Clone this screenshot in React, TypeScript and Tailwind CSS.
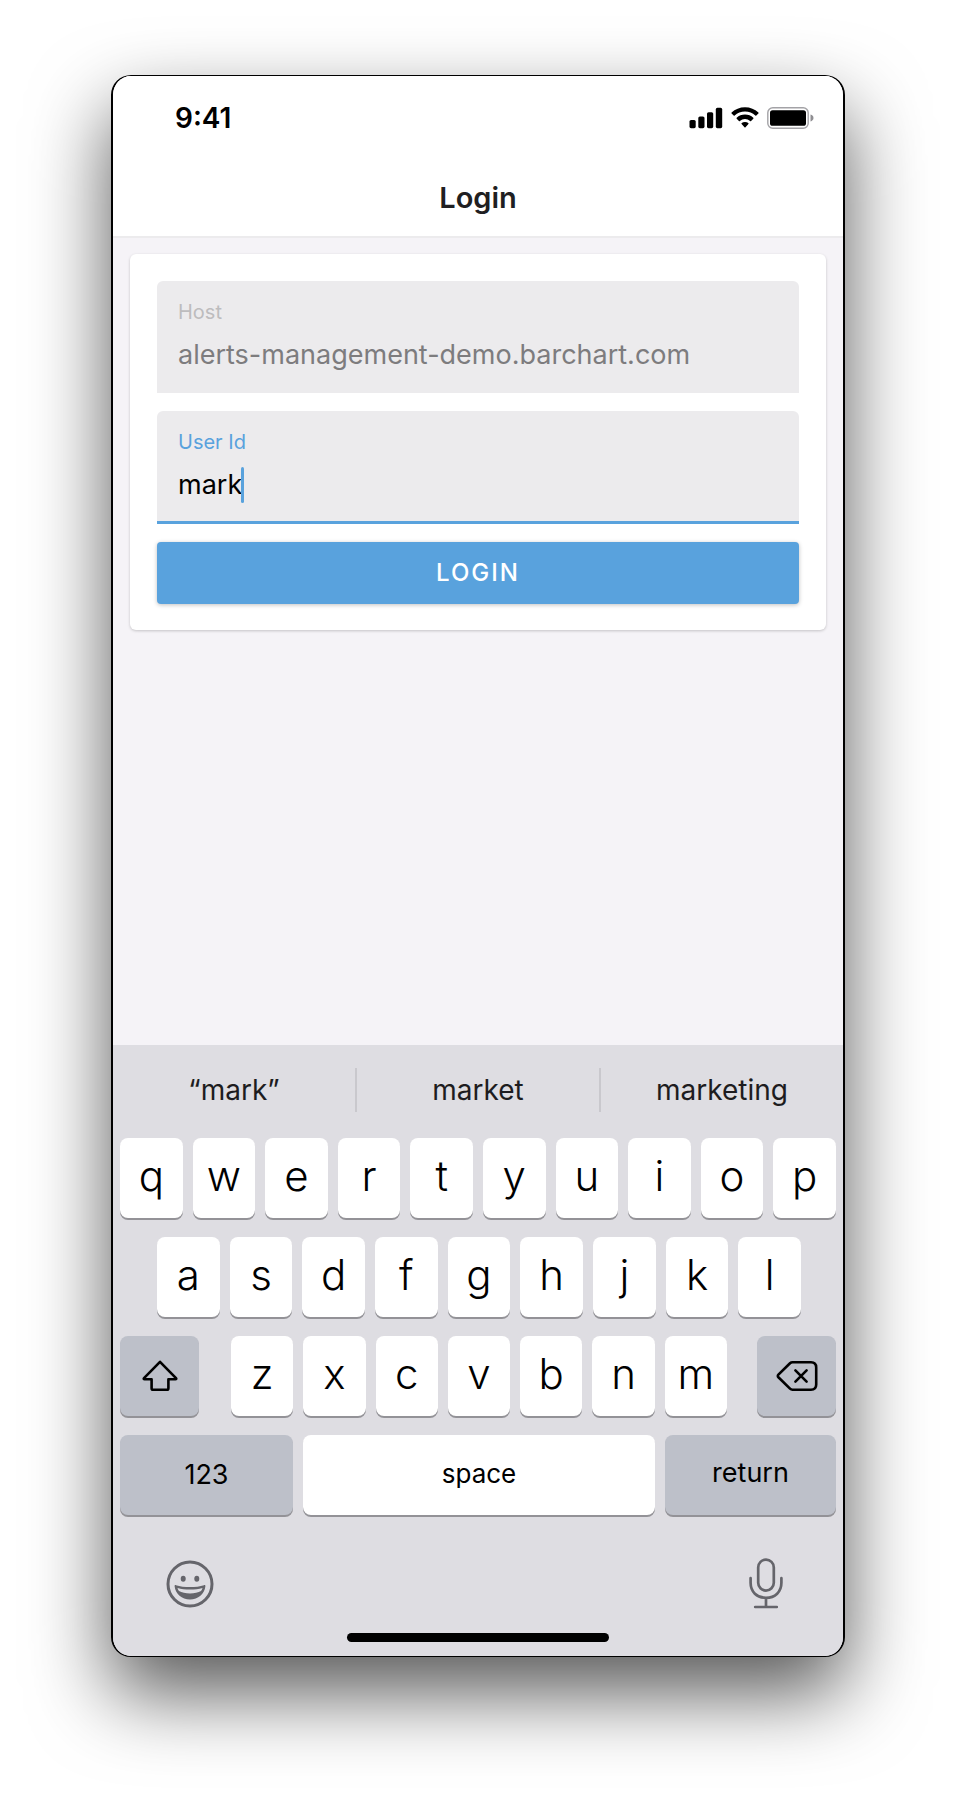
import React, { useState } from "react";

const TOP_ROW = ["q", "w", "e", "r", "t", "y", "u", "i", "o", "p"];
const MIDDLE_ROW = ["a", "s", "d", "f", "g", "h", "j", "k", "l"];
const BOTTOM_ROW = ["z", "x", "c", "v", "b", "n", "m"];
const SUGGESTIONS = ["“mark”", "market", "marketing"];

function SignalIcon() {
  return (
    <svg width="34" height="22" viewBox="0 0 34 22" aria-hidden="true">
      <rect x="0.5" y="13" width="6.2" height="8.2" rx="1.6" />
      <rect x="9.3" y="9.5" width="6.2" height="11.7" rx="1.6" />
      <rect x="18" y="5.2" width="6.2" height="16" rx="1.6" />
      <rect x="26.8" y="0.8" width="6.4" height="20.4" rx="1.6" />
    </svg>
  );
}

function WifiIcon() {
  return (
    <svg width="28" height="22" viewBox="0 0 28 22" aria-hidden="true">
      <path d="M14 0.2C8.8 0.2 4.1 2.2 0.6 5.5c-.3.3-.3.7 0 1l2.1 2.1c.3.3.7.3 1 0C6.4 6.1 10 4.6 14 4.600s7.600 1.500 10.300 4c.3.3.7.3 1 0l2.100-2.100c.3-.3.3-.7 0-1C23.900 2.200 19.200.2 14 .2Z" />
      <path d="M14 7.600c-3.200 0-6.100 1.200-8.300 3.200-.3.3-.3.7 0 1l2.200 2.200c.3.3.7.3 1 0 1.400-1.200 3.200-2 5.100-2s3.700.8 5.100 2c.3.3.7.3 1 0l2.200-2.200c.3-.3.3-.7 0-1-2.200-2-5.100-3.200-8.300-3.200Z" />
      <path d="M14 14.900c-1.300 0-2.400.4-3.300 1.100-.3.3-.4.7-.1 1.100l2.900 3.100c.3.3.7.3 1 0l2.900-3.100c.3-.4.2-.8-.1-1.100-.9-.7-2-1.100-3.300-1.100Z" />
    </svg>
  );
}

function BatteryIcon() {
  return (
    <svg width="47" height="22" viewBox="0 0 47 22" aria-hidden="true">
      <rect x="0.8" y="0.7" width="40.4" height="20.6" rx="5" fill="none" stroke="#a3a2a6" strokeWidth="1.4" />
      <rect x="3" y="3.2" width="36" height="15.6" rx="2.6" />
      <path d="M43.500 7.500c1.900.6 3 1.900 3 3.500s-1.100 2.900-3 3.500Z" fill="#8f8e92" />
    </svg>
  );
}

function ShiftIcon() {
  return (
    <svg width="36" height="32" viewBox="0 0 36 32" fill="none" stroke="#000" strokeWidth="2.6" strokeLinejoin="round" aria-hidden="true">
      <path d="M18 1.800 34 18.200c.5.500.2 1-.5 1H26.400V28.200c0 1-.6 1.600-1.600 1.600H11.200c-1 0-1.600-.6-1.600-1.600V19.200H2.500c-.7 0-1-.5-.5-1Z" />
    </svg>
  );
}

function BackspaceIcon() {
  return (
    <svg width="42" height="32" viewBox="0 0 42 32" fill="none" stroke="#000" strokeWidth="2.6" strokeLinejoin="round" strokeLinecap="round" aria-hidden="true">
      <path d="M16.500 2.200H35c3.200 0 5.200 2 5.200 5.200v17.200c0 3.200-2 5.200-5.200 5.200H16.500c-1 0-1.800-.4-2.500-1.100L2.400 17.300c-.8-.8-.8-1.800 0-2.600L14 3.300c.7-.7 1.500-1.100 2.500-1.100Z" />
      <path d="m19.400 10.400 11.200 11.200M30.600 10.400 19.400 21.600" />
    </svg>
  );
}

function EmojiIcon() {
  return (
    <svg width="48" height="48" viewBox="0 0 48 48" fill="#65656b" aria-hidden="true">
      <circle cx="24" cy="24" r="22" fill="none" stroke="#65656b" strokeWidth="3" />
      <ellipse cx="17.200" cy="18.700" rx="2.500" ry="3" />
      <ellipse cx="30.800" cy="18.700" rx="2.500" ry="3" />
      <path
        fillRule="evenodd"
        d="M10 25.200c3.800 1.300 8.800 1.900 14 1.900s10.200-.6 14-1.900c.9-.3 1.500.2 1.400 1.100C38.600 33.800 32.100 39.600 24 39.600S9.400 33.800 8.600 26.300c-.1-.9.500-1.400 1.400-1.100Zm1.500 2.700c.3 1.200.8 2.200 1.500 3.100 2.700 1.500 6.600 2.400 11 2.400s8.300-.9 11-2.400c.7-.9 1.200-1.900 1.500-3.100-3.600 1-8 1.500-12.500 1.500s-8.900-.5-12.500-1.500Z"
      />
    </svg>
  );
}

function MicIcon() {
  return (
    <svg width="34" height="51" viewBox="0 0 34 51" fill="none" stroke="#65656b" strokeWidth="2.700" strokeLinecap="round" aria-hidden="true">
      <rect x="9.200" y="1.600" width="15.600" height="31" rx="7.800" />
      <path d="M1.600 20.200v4.600c0 9 6.200 15 15.400 15s15.400-6 15.400-15v-4.600M17 40v8.500M6.200 49H27.800" />
    </svg>
  );
}

type KeyProps = { label: string; onPress: () => void };

function LetterKey({ label, onPress }: KeyProps) {
  return (
    <button
      type="button"
      onClick={onPress}
      className="flex h-20 min-w-0 flex-1 items-center justify-center rounded-lg bg-white pb-1 text-[42px] leading-none font-light shadow-[0_2px_0_#939297]"
    >
      {label}
    </button>
  );
}

const FUNCTION_KEY =
  "flex h-20 items-center justify-center rounded-lg bg-[#bdc0c9] shadow-[0_2px_0_#939297]";

export default function App() {
  const [user, setUser] = useState("mark");
  const type = (c: string) => () => setUser((v) => v + c);

  return (
    <div className="flex min-h-screen flex-col items-center bg-white px-4 pt-[75px] pb-[147px] font-['Inter','Liberation_Sans',sans-serif] text-black">
      <div className="flex w-full max-w-[734px] flex-1 flex-col overflow-hidden rounded-[20px] border-x-2 border-y border-black bg-[#f5f3f7] shadow-[0_36px_80px_rgba(0,0,0,0.66)]">
        <header className="border-b-2 border-[#ecebed] bg-white">
          <div className="flex h-[84px] items-center justify-between pr-[29px] pl-[62px]">
            <span className="text-[28px] leading-8 font-semibold">9:41</span>
            <div className="flex items-center gap-2">
              <SignalIcon />
              <WifiIcon />
              <BatteryIcon />
            </div>
          </div>
          <h1 className="flex h-[76px] items-center justify-center text-[29px] font-semibold text-[#1f1f22]">
            Login
          </h1>
        </header>

        <main className="flex-1 px-[17px] pt-4 pb-8">
          <form
            onSubmit={(e) => e.preventDefault()}
            className="flex flex-col gap-[18px] rounded-md bg-white px-[27px] pt-[27px] pb-[26px] shadow-[0_1px_3px_rgba(0,0,0,0.2)]"
          >
            <label className="flex h-[112px] flex-col rounded-t-md bg-[#ecebed] px-[21px] pt-[17px]">
              <span className="text-[20px] leading-7 text-[#bdbcbe]">Host</span>
              <input
                readOnly
                value="alerts-management-demo.barchart.com"
                className="mt-[11px] w-full text-[27px] leading-9 text-[#7d7c7e] outline-none"
              />
            </label>
            <label className="flex h-[113px] flex-col rounded-t-md border-b-3 border-[#59a2dd] bg-[#ecebed] px-[21px] pt-[17px]">
              <span className="text-[20px] leading-7 text-[#59a2dd]">User Id</span>
              <span className="mt-[11px] flex items-center">
                <input
                  value={user}
                  onChange={(e) => setUser(e.target.value)}
                  className="field-sizing-content max-w-full text-[27px] leading-9 caret-transparent outline-none"
                />
                <span className="-ml-px h-9 w-[3px] rounded-full bg-[#59a2dd]" />
              </span>
            </label>
            <button
              type="submit"
              className="h-[62px] rounded bg-[#59a2dd] text-[24px] font-medium tracking-[2px] text-white uppercase shadow-[0_1px_4px_rgba(0,0,0,0.25)]"
            >
              Login
            </button>
          </form>
        </main>

        <section aria-label="Keyboard" className="bg-[#dedde2]">
          <div className="flex h-[93px] items-center pb-[3px]">
            {SUGGESTIONS.map((s, i) => (
              <React.Fragment key={s}>
                {i > 0 && <span className="h-11 w-0.5 bg-[#c9c8cd]" />}
                <button
                  type="button"
                  onClick={() => setUser(s.replace(/[“”]/g, ""))}
                  className="flex-1 basis-0 text-[28px] text-[#1d1c20]"
                >
                  {s}
                </button>
              </React.Fragment>
            ))}
          </div>

          <div className="flex flex-col gap-[19px] px-[7px]">
            <div className="flex gap-2.5">
              {TOP_ROW.map((c) => (
                <LetterKey key={c} label={c} onPress={type(c)} />
              ))}
            </div>
            <div className="flex gap-2.5 pr-[35px] pl-[37px]">
              {MIDDLE_ROW.map((c) => (
                <LetterKey key={c} label={c} onPress={type(c)} />
              ))}
            </div>
            <div className="flex justify-between">
              <button type="button" aria-label="Shift" className={FUNCTION_KEY + " w-[79px]"}>
                <ShiftIcon />
              </button>
              <div className="flex min-w-0 flex-1 gap-2.5 pr-[30px] pl-8">
                {BOTTOM_ROW.map((c) => (
                  <LetterKey key={c} label={c} onPress={type(c)} />
                ))}
              </div>
              <button
                type="button"
                aria-label="Delete"
                onClick={() => setUser((v) => v.slice(0, -1))}
                className={FUNCTION_KEY + " w-[79px]"}
              >
                <BackspaceIcon />
              </button>
            </div>
            <div className="flex gap-2.5">
              <button type="button" className={FUNCTION_KEY + " w-[173px] text-[27px]"}>
                123
              </button>
              <button
                type="button"
                onClick={type(" ")}
                className="flex h-20 flex-1 items-center justify-center rounded-lg bg-white pb-1 text-[26px] shadow-[0_2px_0_#939297]"
              >
                space
              </button>
              <button type="button" className={FUNCTION_KEY + " w-[171px] pb-1 text-[27px]"}>
                return
              </button>
            </div>
          </div>

          <div className="flex items-center justify-between px-[53px] pt-[43px]">
            <button type="button" aria-label="Emoji">
              <EmojiIcon />
            </button>
            <button type="button" aria-label="Dictate" className="px-[7px]">
              <MicIcon />
            </button>
          </div>
          <div className="flex justify-center pt-6 pb-3.5">
            <span className="h-[9px] w-[262px] rounded-full bg-black" />
          </div>
        </section>
      </div>
    </div>
  );
}
